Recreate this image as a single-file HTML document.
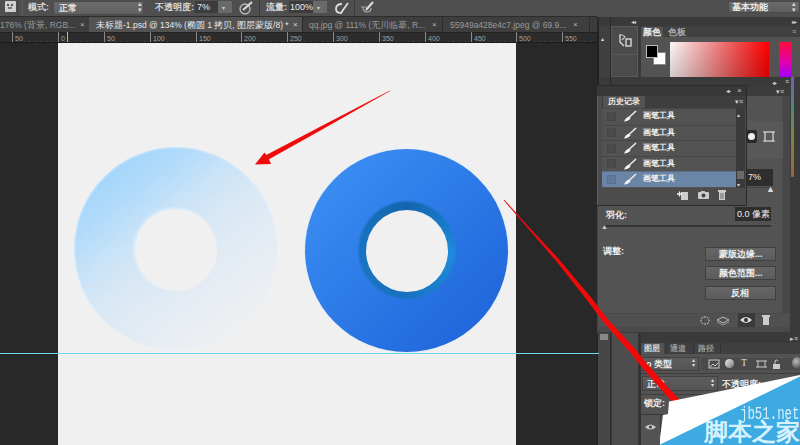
<!DOCTYPE html>
<html><head><meta charset="utf-8">
<style>
*{margin:0;padding:0;box-sizing:border-box}
html,body{width:800px;height:445px;overflow:hidden;background:#282828;font-family:"Liberation Sans",sans-serif;}
.a{position:absolute}
.t{position:absolute;color:#d8d8d8;font-size:9px;line-height:10px;white-space:nowrap}
</style></head><body>
<div class="a" style="left:0;top:0;width:800px;height:445px;overflow:hidden">

<!-- options bar -->
<div class="a" id="opt" style="left:0;top:0;width:800px;height:17px;background:#4f4f4f"></div>
<!-- tool preset icon -->
<div class="a" style="left:5px;top:1px;width:11px;height:11px;background:#d0d0d0;border-radius:1px"></div>
<div class="a" style="left:7px;top:4px;width:2px;height:2px;background:#555"></div>
<div class="a" style="left:11px;top:4px;width:2px;height:2px;background:#555"></div>
<div class="a" style="left:8px;top:7px;width:4px;height:2px;background:#777"></div>
<div class="a" style="left:17px;top:0;width:1px;height:16px;background:#3c3c3c"></div>
<div class="a" style="left:22px;top:0;width:1px;height:16px;background:#5c5c5c"></div>
<div class="t" style="left:28px;top:2px;font-size:9px;font-weight:bold">模式:</div>
<div class="a" style="left:53px;top:1px;width:91px;height:14px;background:linear-gradient(#6c6c6c,#606060);border-radius:2px;box-shadow:inset 0 0 0 1px #4a4a4a"></div>
<div class="t" style="left:59px;top:3px;font-size:9px;color:#e6e6e6;font-weight:bold">正常</div>
<div class="t" style="left:138px;top:1px;font-size:7px;color:#ddd;line-height:6px">▴<br>▾</div>
<div class="t" style="left:155px;top:2px;font-size:9px;font-weight:bold">不透明度:</div>
<div class="a" style="left:195px;top:1px;width:23px;height:12px;background:#3c3c3c"></div>
<div class="t" style="left:197px;top:2px;font-size:9px;color:#eee">7%</div>
<div class="a" style="left:218px;top:1px;width:14px;height:12px;background:#6a6a6a"></div>
<div class="t" style="left:222px;top:3px;font-size:6px;color:#ccc">▾</div>
<svg class="a" style="left:239px;top:1px" width="15" height="14"><circle cx="6" cy="8" r="5" fill="none" stroke="#bbb" stroke-width="1.3"/><path d="M4 9 L13 1" stroke="#ddd" stroke-width="2"/></svg>
<div class="a" style="left:259px;top:0;width:1px;height:16px;background:#3c3c3c"></div>
<div class="t" style="left:266px;top:2px;font-size:9px;font-weight:bold">流量:</div>
<div class="a" style="left:289px;top:1px;width:24px;height:12px;background:#3c3c3c"></div>
<div class="t" style="left:290px;top:2px;font-size:9px;color:#eee">100%</div>
<div class="a" style="left:313px;top:1px;width:14px;height:12px;background:#6a6a6a"></div>
<div class="t" style="left:317px;top:3px;font-size:6px;color:#ccc">▾</div>
<svg class="a" style="left:334px;top:1px" width="16" height="14"><path d="M8 3 Q2 3 2 8 Q2 12 7 12 L9 9 L14 2" fill="none" stroke="#ddd" stroke-width="1.8"/></svg>
<div class="a" style="left:354px;top:0;width:1px;height:16px;background:#3c3c3c"></div>
<svg class="a" style="left:359px;top:1px" width="16" height="14"><path d="M2 6 L8 6 M4 6 Q4 11 8 11 Q12 11 12 7" fill="none" stroke="#aaa" stroke-width="1.2"/><path d="M7 9 L14 1" stroke="#ddd" stroke-width="2"/></svg>
<div class="a" style="left:728px;top:1px;width:72px;height:12px;background:linear-gradient(#6c6c6c,#5e5e5e);box-shadow:inset 0 0 0 1px #4a4a4a"></div>
<div class="t" style="left:732px;top:2px;font-size:9px;color:#eee;font-weight:bold">基本功能</div>
<div class="t" style="left:792px;top:1px;font-size:7px;color:#ddd;line-height:6px">▴<br>▾</div>

<!-- tab strip -->
<div class="a" id="tabs" style="left:0;top:16px;width:597px;height:16px;background:#3c3c3c;border-top:1px solid #2c2c2c"></div>
<div class="a" style="left:0;top:17px;width:89px;height:15px;background:#3e3e3e"></div>
<div class="t" style="left:0;top:20px;font-size:8.5px;color:#9a9a9a">176% (背景, RGB...</div>
<div class="t" style="left:80px;top:20px;font-size:8px;color:#bbb">×</div>
<div class="a" style="left:89px;top:17px;width:213px;height:15px;background:#535353"></div>
<div class="t" style="left:96px;top:20px;font-size:8.5px;color:#e8e8e8">未标题-1.psd @ 134% (椭圆 1 拷贝, 图层蒙版/8) *</div>
<div class="t" style="left:293px;top:20px;font-size:8px;color:#ddd">×</div>
<div class="a" style="left:302px;top:17px;width:1px;height:15px;background:#2c2c2c"></div>
<div class="a" style="left:303px;top:17px;width:139px;height:15px;background:#3e3e3e"></div>
<div class="t" style="left:309px;top:20px;font-size:8.5px;color:#9a9a9a">qq.jpg @ 111% (无川临摹, R...</div>
<div class="t" style="left:432px;top:20px;font-size:8px;color:#bbb">×</div>
<div class="a" style="left:442px;top:17px;width:1px;height:15px;background:#2c2c2c"></div>
<div class="a" style="left:443px;top:17px;width:146px;height:15px;background:#3e3e3e"></div>
<div class="t" style="left:450px;top:20px;font-size:8.5px;color:#9a9a9a">55949a428e4c7.jpeg @ 69.9...</div>
<div class="t" style="left:573px;top:20px;font-size:8px;color:#bbb">×</div>
<div class="a" style="left:589px;top:17px;width:1px;height:15px;background:#2c2c2c"></div>

<!-- ruler -->
<div class="a" id="ruler" style="left:0;top:32px;width:597px;height:11px;background:#2c2c2c;border-top:1px solid #222"></div>
<div class="a" style="left:0;top:42px;width:597px;height:1px;background:#1c1c1c;z-index:1"></div><div class="a" style="left:67px;top:32px;width:1px;height:11px;background:#bbb"></div><svg class="a" style="left:0;top:32px" width="597" height="11" id="rsvg"><line x1="12.5" y1="0" x2="12.5" y2="11" stroke="#8a8a8a" stroke-width="1"/><text x="15" y="9" font-size="7" fill="#a0a0a0" font-family="Liberation Sans">50</text><rect x="18" y="9" width="1" height="2" fill="#4a4a4a"/><rect x="24" y="9" width="1" height="2" fill="#4a4a4a"/><rect x="29" y="9" width="1" height="2" fill="#4a4a4a"/><rect x="35" y="9" width="1" height="2" fill="#4a4a4a"/><rect x="41" y="9" width="1" height="2" fill="#4a4a4a"/><rect x="47" y="9" width="1" height="2" fill="#4a4a4a"/><rect x="52" y="9" width="1" height="2" fill="#4a4a4a"/><line x1="58.5" y1="0" x2="58.5" y2="11" stroke="#8a8a8a" stroke-width="1"/><text x="61" y="9" font-size="7" fill="#a0a0a0" font-family="Liberation Sans">0</text><rect x="64" y="9" width="1" height="2" fill="#4a4a4a"/><rect x="69" y="9" width="1" height="2" fill="#4a4a4a"/><rect x="75" y="9" width="1" height="2" fill="#4a4a4a"/><rect x="81" y="9" width="1" height="2" fill="#4a4a4a"/><rect x="87" y="9" width="1" height="2" fill="#4a4a4a"/><rect x="92" y="9" width="1" height="2" fill="#4a4a4a"/><rect x="98" y="9" width="1" height="2" fill="#4a4a4a"/><line x1="104.5" y1="0" x2="104.5" y2="11" stroke="#8a8a8a" stroke-width="1"/><text x="107" y="9" font-size="7" fill="#a0a0a0" font-family="Liberation Sans">50</text><rect x="110" y="9" width="1" height="2" fill="#4a4a4a"/><rect x="115" y="9" width="1" height="2" fill="#4a4a4a"/><rect x="121" y="9" width="1" height="2" fill="#4a4a4a"/><rect x="127" y="9" width="1" height="2" fill="#4a4a4a"/><rect x="133" y="9" width="1" height="2" fill="#4a4a4a"/><rect x="138" y="9" width="1" height="2" fill="#4a4a4a"/><rect x="144" y="9" width="1" height="2" fill="#4a4a4a"/><line x1="150.5" y1="0" x2="150.5" y2="11" stroke="#8a8a8a" stroke-width="1"/><text x="153" y="9" font-size="7" fill="#a0a0a0" font-family="Liberation Sans">100</text><rect x="155" y="9" width="1" height="2" fill="#4a4a4a"/><rect x="161" y="9" width="1" height="2" fill="#4a4a4a"/><rect x="167" y="9" width="1" height="2" fill="#4a4a4a"/><rect x="173" y="9" width="1" height="2" fill="#4a4a4a"/><rect x="178" y="9" width="1" height="2" fill="#4a4a4a"/><rect x="184" y="9" width="1" height="2" fill="#4a4a4a"/><rect x="190" y="9" width="1" height="2" fill="#4a4a4a"/><line x1="196.5" y1="0" x2="196.5" y2="11" stroke="#8a8a8a" stroke-width="1"/><text x="199" y="9" font-size="7" fill="#a0a0a0" font-family="Liberation Sans">150</text><rect x="201" y="9" width="1" height="2" fill="#4a4a4a"/><rect x="207" y="9" width="1" height="2" fill="#4a4a4a"/><rect x="213" y="9" width="1" height="2" fill="#4a4a4a"/><rect x="218" y="9" width="1" height="2" fill="#4a4a4a"/><rect x="224" y="9" width="1" height="2" fill="#4a4a4a"/><rect x="230" y="9" width="1" height="2" fill="#4a4a4a"/><rect x="236" y="9" width="1" height="2" fill="#4a4a4a"/><line x1="241.5" y1="0" x2="241.5" y2="11" stroke="#8a8a8a" stroke-width="1"/><text x="244" y="9" font-size="7" fill="#a0a0a0" font-family="Liberation Sans">200</text><rect x="247" y="9" width="1" height="2" fill="#4a4a4a"/><rect x="253" y="9" width="1" height="2" fill="#4a4a4a"/><rect x="259" y="9" width="1" height="2" fill="#4a4a4a"/><rect x="264" y="9" width="1" height="2" fill="#4a4a4a"/><rect x="270" y="9" width="1" height="2" fill="#4a4a4a"/><rect x="276" y="9" width="1" height="2" fill="#4a4a4a"/><rect x="282" y="9" width="1" height="2" fill="#4a4a4a"/><line x1="287.5" y1="0" x2="287.5" y2="11" stroke="#8a8a8a" stroke-width="1"/><text x="290" y="9" font-size="7" fill="#a0a0a0" font-family="Liberation Sans">250</text><rect x="293" y="9" width="1" height="2" fill="#4a4a4a"/><rect x="299" y="9" width="1" height="2" fill="#4a4a4a"/><rect x="304" y="9" width="1" height="2" fill="#4a4a4a"/><rect x="310" y="9" width="1" height="2" fill="#4a4a4a"/><rect x="316" y="9" width="1" height="2" fill="#4a4a4a"/><rect x="322" y="9" width="1" height="2" fill="#4a4a4a"/><rect x="327" y="9" width="1" height="2" fill="#4a4a4a"/><line x1="333.5" y1="0" x2="333.5" y2="11" stroke="#8a8a8a" stroke-width="1"/><text x="336" y="9" font-size="7" fill="#a0a0a0" font-family="Liberation Sans">300</text><rect x="339" y="9" width="1" height="2" fill="#4a4a4a"/><rect x="345" y="9" width="1" height="2" fill="#4a4a4a"/><rect x="350" y="9" width="1" height="2" fill="#4a4a4a"/><rect x="356" y="9" width="1" height="2" fill="#4a4a4a"/><rect x="362" y="9" width="1" height="2" fill="#4a4a4a"/><rect x="367" y="9" width="1" height="2" fill="#4a4a4a"/><rect x="373" y="9" width="1" height="2" fill="#4a4a4a"/><line x1="379.5" y1="0" x2="379.5" y2="11" stroke="#8a8a8a" stroke-width="1"/><text x="382" y="9" font-size="7" fill="#a0a0a0" font-family="Liberation Sans">350</text><rect x="385" y="9" width="1" height="2" fill="#4a4a4a"/><rect x="390" y="9" width="1" height="2" fill="#4a4a4a"/><rect x="396" y="9" width="1" height="2" fill="#4a4a4a"/><rect x="402" y="9" width="1" height="2" fill="#4a4a4a"/><rect x="408" y="9" width="1" height="2" fill="#4a4a4a"/><rect x="413" y="9" width="1" height="2" fill="#4a4a4a"/><rect x="419" y="9" width="1" height="2" fill="#4a4a4a"/><line x1="425.5" y1="0" x2="425.5" y2="11" stroke="#8a8a8a" stroke-width="1"/><text x="428" y="9" font-size="7" fill="#a0a0a0" font-family="Liberation Sans">400</text><rect x="431" y="9" width="1" height="2" fill="#4a4a4a"/><rect x="436" y="9" width="1" height="2" fill="#4a4a4a"/><rect x="442" y="9" width="1" height="2" fill="#4a4a4a"/><rect x="448" y="9" width="1" height="2" fill="#4a4a4a"/><rect x="453" y="9" width="1" height="2" fill="#4a4a4a"/><rect x="459" y="9" width="1" height="2" fill="#4a4a4a"/><rect x="465" y="9" width="1" height="2" fill="#4a4a4a"/><line x1="471.5" y1="0" x2="471.5" y2="11" stroke="#8a8a8a" stroke-width="1"/><text x="474" y="9" font-size="7" fill="#a0a0a0" font-family="Liberation Sans">450</text><rect x="476" y="9" width="1" height="2" fill="#4a4a4a"/><rect x="482" y="9" width="1" height="2" fill="#4a4a4a"/><rect x="488" y="9" width="1" height="2" fill="#4a4a4a"/><rect x="494" y="9" width="1" height="2" fill="#4a4a4a"/><rect x="499" y="9" width="1" height="2" fill="#4a4a4a"/><rect x="505" y="9" width="1" height="2" fill="#4a4a4a"/><rect x="511" y="9" width="1" height="2" fill="#4a4a4a"/><line x1="516.5" y1="0" x2="516.5" y2="11" stroke="#8a8a8a" stroke-width="1"/><text x="519" y="9" font-size="7" fill="#a0a0a0" font-family="Liberation Sans">500</text><rect x="522" y="9" width="1" height="2" fill="#4a4a4a"/><rect x="528" y="9" width="1" height="2" fill="#4a4a4a"/><rect x="534" y="9" width="1" height="2" fill="#4a4a4a"/><rect x="539" y="9" width="1" height="2" fill="#4a4a4a"/><rect x="545" y="9" width="1" height="2" fill="#4a4a4a"/><rect x="551" y="9" width="1" height="2" fill="#4a4a4a"/><rect x="557" y="9" width="1" height="2" fill="#4a4a4a"/><line x1="562.5" y1="0" x2="562.5" y2="11" stroke="#8a8a8a" stroke-width="1"/><text x="565" y="9" font-size="7" fill="#a0a0a0" font-family="Liberation Sans">550</text><rect x="568" y="9" width="1" height="2" fill="#4a4a4a"/><rect x="574" y="9" width="1" height="2" fill="#4a4a4a"/><rect x="580" y="9" width="1" height="2" fill="#4a4a4a"/><rect x="585" y="9" width="1" height="2" fill="#4a4a4a"/><rect x="591" y="9" width="1" height="2" fill="#4a4a4a"/><rect x="597" y="9" width="1" height="2" fill="#4a4a4a"/></svg>
<!-- workspace -->
<div class="a" style="left:0;top:43px;width:597px;height:402px;background:#282828"></div>
<div class="a" id="canvas" style="left:58px;top:43px;width:458px;height:402px;background:#f0f0f0"></div>

<!-- light ring -->
<div class="a" style="left:74px;top:147px;width:204px;height:204px;border-radius:50%;background:linear-gradient(142deg,#9ad3fc 0%,#a3d6fb 14.6%,#b2dbfa 25.7%,#c9e3f7 37.8%,#d9e8f5 50%,#e5ecf3 67%,#eef0f2 85%,#f0f0f0 100%);box-shadow:inset 0 0 2px 1px rgba(240,248,255,0.5)"></div>
<div class="a" style="left:134.5px;top:208.5px;width:82px;height:82px;border-radius:50%;background:#f0f0f0;box-shadow:-1px -1px 2px 1px rgba(225,242,255,0.6)"></div>

<!-- blue ring -->
<div class="a" style="left:304.5px;top:148.5px;width:203.5px;height:203.5px;border-radius:50%;background:linear-gradient(135deg,#3f92f5 0%,#2e7ce8 45%,#1c60d8 100%);box-shadow:0 0 1px 0.5px rgba(200,230,255,0.6)"></div>
<div class="a" style="left:355px;top:198px;width:104px;height:104px;background:conic-gradient(#1464ae 0deg,#1778c4 50deg,#1d8bdc 95deg,#1a80cc 140deg,#186fbd 185deg,#1a74c2 240deg,#1872bf 290deg,#1464ae 360deg);-webkit-mask-image:radial-gradient(circle at center,#000 0,#000 47px,transparent 50px);mask-image:radial-gradient(circle at center,#000 0,#000 47px,transparent 50px)"></div>
<div class="a" style="left:366px;top:209.5px;width:82px;height:82px;border-radius:50%;background:#f0f0f0"></div>

<!-- guide -->
<div class="a" style="left:0;top:353px;width:599px;height:1px;background:#6ad8f0;z-index:1"></div>

<!-- right scroll strip -->
<div class="a" style="left:597px;top:32px;width:2px;height:413px;background:#222"></div>
<div class="a" style="left:599px;top:17px;width:11px;height:9px;background:#3a3a3a"></div><div class="a" style="left:599px;top:26px;width:11px;height:51px;background:#404040"></div><div class="a" style="left:599px;top:77px;width:11px;height:368px;background:#3a3a3a"></div>
<div class="t" style="left:601px;top:34px;font-size:6px;color:#ddd">▴</div>

<!-- dock area -->
<div class="a" id="panels" style="left:610px;top:17px;width:190px;height:428px;background:#3a3a3a"></div>
<div class="a" style="left:610px;top:17px;width:1px;height:428px;background:#2a2a2a"></div>
<div class="t" style="left:631px;top:17px;font-size:6px;color:#ccc;letter-spacing:-1px">◂◂</div>
<div class="t" style="left:792px;top:17px;font-size:6px;color:#ccc;letter-spacing:-1px">▸▸</div>
<!-- icon column -->
<div class="a" style="left:611px;top:26px;width:27px;height:51px;background:#4b4b4b;border:1px solid #5a5a5a"></div>
<div class="a" style="left:612px;top:54px;width:25px;height:1px;background:#5a5a5a"></div>
<svg class="a" style="left:617px;top:33px" width="16" height="16"><path d="M3 2 L3 9 L7 13" fill="none" stroke="#ddd" stroke-width="1.3"/><path d="M2 2 Q6 1 8 4 L5 7" fill="none" stroke="#ccc" stroke-width="1.2"/><rect x="9" y="6" width="5" height="7" fill="none" stroke="#eee" stroke-width="1.2"/></svg>
<!-- color panel -->
<div class="a" style="left:641px;top:26px;width:159px;height:51px;background:#535353"></div>
<div class="a" style="left:641px;top:26px;width:159px;height:11px;background:#404040"></div>
<div class="a" style="left:641px;top:27px;width:22px;height:10px;background:#535353"></div>
<div class="t" style="left:643px;top:27px;font-size:8.5px;color:#eee;font-weight:bold">颜色</div>
<div class="t" style="left:668px;top:27px;font-size:8.5px;color:#aaa;font-weight:bold">色板</div>
<div class="t" style="left:792px;top:27px;font-size:7px;color:#aaa">≡</div>
<div class="a" style="left:646px;top:45px;width:12px;height:13px;background:#000;border:1px solid #bbb;z-index:2"></div>
<div class="a" style="left:653px;top:52px;width:13px;height:13px;background:#fff;border:1px solid #888"></div>
<div class="a" style="left:670px;top:42px;width:99px;height:35px;background:linear-gradient(to bottom,rgba(0,0,0,0) 0%,rgba(0,0,0,0.16) 100%),linear-gradient(to right,#fbf6f6,#f0a0a0 35%,#f04848 70%,#ff0000)"></div>
<div class="a" style="left:779px;top:42px;width:13px;height:35px;background:linear-gradient(#ff0a3a,#e000b0 60%,#a000ff)"></div>
<div class="a" style="left:791px;top:77px;width:3px;height:100px;background:linear-gradient(#7a5cb0,#4a8a7a 30%,#7a8a40 60%,#a06040)"></div>
<div class="t" style="left:772px;top:78px;font-size:6px;color:#ccc;letter-spacing:-1px">◂▸</div>
<div class="t" style="left:785px;top:77px;font-size:7px;color:#ccc">≡</div>

<!-- refine panel -->
<div class="a" style="left:597px;top:86px;width:193px;height:10px;background:#3c3c3c"></div>
<div class="t" style="left:776px;top:87px;font-size:7px;color:#ccc">▾≡</div>
<div class="a" style="left:597px;top:96px;width:193px;height:237px;background:#535353;border-left:1px solid #444"></div>
<div class="a" style="left:782px;top:96px;width:8px;height:222px;background:#474747"></div>
<div class="a" style="left:747px;top:121px;width:36px;height:38px;background:#585858"></div>
<div class="a" style="left:746px;top:130px;width:11px;height:13px;background:#2a2a2a;border-radius:2px"></div>
<div class="a" style="left:748px;top:133px;width:7px;height:7px;background:#eee;border-radius:50%"></div>
<svg class="a" style="left:763px;top:130px" width="12" height="13"><rect x="2" y="2" width="8" height="9" fill="none" stroke="#ddd" stroke-width="1.2"/><path d="M0 2H2M10 2H12M0 11H2M10 11H12" stroke="#ddd"/></svg>
<div class="a" style="left:746px;top:169px;width:27px;height:17px;background:#2e2e2e"></div>
<div class="t" style="left:748px;top:172px;font-size:9px;color:#eee">7%</div>
<div class="a" style="left:745px;top:187px;width:27px;height:1px;background:#444"></div>
<div class="t" style="left:766px;top:184px;font-size:9px;color:#ddd">▲</div>
<div class="t" style="left:606px;top:210px;font-size:9px;color:#eee;font-weight:bold">羽化:</div>
<div class="a" style="left:735px;top:207px;width:36px;height:14px;background:#2e2e2e"></div>
<div class="t" style="left:737px;top:209px;font-size:9px;color:#eee">0.0 像素</div>
<div class="a" style="left:604px;top:225px;width:167px;height:2px;background:#333"></div>
<div class="t" style="left:601px;top:222px;font-size:7px;color:#ccc">▲</div>
<div class="t" style="left:603px;top:246px;font-size:9px;color:#eee;font-weight:bold">调整:</div>
<div class="a" style="left:706px;top:248px;width:69px;height:12px;background:linear-gradient(#666,#5c5c5c);box-shadow:0 0 0 1px #404040"></div>
<div class="t" style="left:719px;top:249px;font-size:9px;color:#eee;font-weight:bold">蒙版边缘...</div>
<div class="a" style="left:706px;top:267px;width:69px;height:12px;background:linear-gradient(#666,#5c5c5c);box-shadow:0 0 0 1px #404040"></div>
<div class="t" style="left:719px;top:268px;font-size:9px;color:#eee;font-weight:bold">颜色范围...</div>
<div class="a" style="left:706px;top:287px;width:69px;height:12px;background:linear-gradient(#666,#5c5c5c);box-shadow:0 0 0 1px #404040"></div>
<div class="t" style="left:731px;top:288px;font-size:9px;color:#eee;font-weight:bold">反相</div>
<div class="a" style="left:598px;top:313px;width:192px;height:14px;background:#505050;border-top:1px solid #4a4a4a"></div>
<div class="a" style="left:738px;top:313px;width:17px;height:14px;background:#3a3a3a"></div>
<svg class="a" style="left:699px;top:315px" width="12" height="11"><rect x="2" y="2" width="8" height="7" rx="3" fill="none" stroke="#ccc" stroke-dasharray="2 1"/></svg>
<svg class="a" style="left:716px;top:315px" width="14" height="11"><path d="M1 5 L7 2 L13 5 L7 8Z" fill="none" stroke="#bbb"/><path d="M1 7 L7 10 L13 7" fill="none" stroke="#999"/></svg>
<svg class="a" style="left:739px;top:315px" width="14" height="10"><path d="M1 5 Q7 -1 13 5 Q7 11 1 5Z" fill="#ddd"/><circle cx="7" cy="5" r="2" fill="#333"/></svg>
<svg class="a" style="left:761px;top:314px" width="10" height="12"><rect x="2" y="3" width="6" height="8" fill="#ccc"/><rect x="1" y="1" width="8" height="2" fill="#ccc"/></svg>
<div class="a" style="left:598px;top:327px;width:192px;height:6px;background:#4a4a4a;border-bottom:1px solid #3a3a3a"></div>

<!-- history floating -->
<div class="a" style="left:596px;top:85px;width:151px;height:121px;background:#4c4c4c;border:1px solid #2a2a2a;box-shadow:inset 1px 1px 0 #606060"></div>
<div class="a" style="left:597px;top:86px;width:149px;height:10px;background:#383838"></div>
<div class="t" style="left:726px;top:86px;font-size:6px;color:#ccc;letter-spacing:-1px">◂▸</div>
<div class="t" style="left:737px;top:86px;font-size:8px;color:#ccc">×</div>
<div class="a" style="left:602px;top:96px;width:144px;height:12px;background:#3e3e3e"></div>
<div class="a" style="left:603px;top:96px;width:42px;height:12px;background:#535353"></div>
<div class="t" style="left:608px;top:97px;font-size:8px;color:#f0f0f0;font-weight:bold">历史记录</div>
<div class="t" style="left:735px;top:97px;font-size:7px;color:#ccc">▾≡</div>
<div class="a" style="left:602px;top:108px;width:134px;height:80px;background:#535353"></div>
<div class="a" style="left:602px;top:108px;width:134px;height:15.6px;background:#535353;border-top:1px solid #474747"></div>
<div class="a" style="left:607px;top:111.5px;width:9px;height:9px;border:1px solid #464646;background:#4a4a4a"></div>
<svg class="a" style="left:623px;top:110px" width="14" height="12"><path d="M13 1 L6 7.5" stroke="#e8e8e8" stroke-width="1.7"/><path d="M6.5 6.5 Q3 7 1 11.5 Q5 11.5 7.5 8.5Z" fill="#f4f4f4"/></svg>
<div class="t" style="left:643px;top:111px;font-size:8.2px;color:#f4f4f4;font-weight:bold">画笔工具</div>
<div class="a" style="left:602px;top:124.6px;width:134px;height:15.6px;background:#535353;border-top:1px solid #474747"></div>
<div class="a" style="left:607px;top:128.1px;width:9px;height:9px;border:1px solid #464646;background:#4a4a4a"></div>
<svg class="a" style="left:623px;top:126.6px" width="14" height="12"><path d="M13 1 L6 7.5" stroke="#e8e8e8" stroke-width="1.7"/><path d="M6.5 6.5 Q3 7 1 11.5 Q5 11.5 7.5 8.5Z" fill="#f4f4f4"/></svg>
<div class="t" style="left:643px;top:127.6px;font-size:8.2px;color:#f4f4f4;font-weight:bold">画笔工具</div>
<div class="a" style="left:602px;top:140.2px;width:134px;height:15.6px;background:#535353;border-top:1px solid #474747"></div>
<div class="a" style="left:607px;top:143.7px;width:9px;height:9px;border:1px solid #464646;background:#4a4a4a"></div>
<svg class="a" style="left:623px;top:142.2px" width="14" height="12"><path d="M13 1 L6 7.5" stroke="#e8e8e8" stroke-width="1.7"/><path d="M6.5 6.5 Q3 7 1 11.5 Q5 11.5 7.5 8.5Z" fill="#f4f4f4"/></svg>
<div class="t" style="left:643px;top:143.2px;font-size:8.2px;color:#f4f4f4;font-weight:bold">画笔工具</div>
<div class="a" style="left:602px;top:155.8px;width:134px;height:15.6px;background:#535353;border-top:1px solid #474747"></div>
<div class="a" style="left:607px;top:159.3px;width:9px;height:9px;border:1px solid #464646;background:#4a4a4a"></div>
<svg class="a" style="left:623px;top:157.8px" width="14" height="12"><path d="M13 1 L6 7.5" stroke="#e8e8e8" stroke-width="1.7"/><path d="M6.5 6.5 Q3 7 1 11.5 Q5 11.5 7.5 8.5Z" fill="#f4f4f4"/></svg>
<div class="t" style="left:643px;top:158.8px;font-size:8.2px;color:#f4f4f4;font-weight:bold">画笔工具</div>
<div class="a" style="left:602px;top:171.4px;width:134px;height:15.6px;background:#6b85a6;border-top:1px solid #5a6e88"></div>
<div class="a" style="left:607px;top:174.9px;width:9px;height:9px;border:1px solid #587090;background:#617a9c"></div>
<svg class="a" style="left:623px;top:173.4px" width="14" height="12"><path d="M13 1 L6 7.5" stroke="#e8e8e8" stroke-width="1.7"/><path d="M6.5 6.5 Q3 7 1 11.5 Q5 11.5 7.5 8.5Z" fill="#f4f4f4"/></svg>
<div class="t" style="left:643px;top:174.4px;font-size:8.2px;color:#f4f4f4;font-weight:bold">画笔工具</div>
<div class="a" style="left:736px;top:108px;width:9px;height:80px;background:#3a3a3a"></div>
<div class="t" style="left:737px;top:110px;font-size:6px;color:#ccc">▴</div>
<div class="a" style="left:737px;top:171px;width:7px;height:8px;background:#6a6a6a"></div>
<div class="t" style="left:737px;top:180px;font-size:6px;color:#ccc">▾</div>
<div class="a" style="left:602px;top:188px;width:144px;height:17px;background:#4c4c4c"></div>
<svg class="a" style="left:676px;top:189px" width="13" height="12"><rect x="5" y="3" width="7" height="8" fill="#ccc"/><path d="M1 5H6M3.5 2.5V7.5" stroke="#eee" stroke-width="1.3"/></svg>
<svg class="a" style="left:697px;top:190px" width="13" height="10"><rect x="1" y="2" width="11" height="7" rx="1" fill="#ccc"/><circle cx="6.5" cy="5.5" r="2" fill="#444"/><rect x="4" y="1" width="4" height="2" fill="#ccc"/></svg>
<svg class="a" style="left:717px;top:189px" width="10" height="12"><rect x="2" y="3" width="6" height="8" fill="#ccc"/><rect x="1" y="1" width="8" height="2" fill="#ccc"/><path d="M4 4V10M6 4V10" stroke="#666"/></svg>

<!-- collapsed columns bottom -->
<div class="a" style="left:598px;top:333px;width:12px;height:112px;background:#474747"></div>
<div class="a" style="left:600px;top:334px;width:8px;height:6px;background:#888"></div>
<div class="a" style="left:611px;top:333px;width:27px;height:112px;background:#4d4d4d;border-left:1px solid #3a3a3a"></div>
<div class="a" style="left:638px;top:333px;width:3px;height:112px;background:#333"></div>

<!-- layers -->
<div class="a" style="left:641px;top:333px;width:159px;height:10px;background:#3a3a3a"></div>
<div class="t" style="left:790px;top:334px;font-size:7px;color:#ccc">▸≡</div>
<div class="a" style="left:641px;top:343px;width:159px;height:102px;background:#535353"></div>
<div class="a" style="left:641px;top:343px;width:159px;height:11px;background:#404040"></div>
<div class="a" style="left:641px;top:343px;width:23px;height:11px;background:#535353"></div>
<div class="t" style="left:644px;top:344px;font-size:8px;color:#e0e0e0;font-weight:bold">图层</div>
<div class="a" style="left:666px;top:343px;width:1px;height:11px;background:#333"></div>
<div class="t" style="left:670px;top:344px;font-size:8px;color:#9a9a9a;font-weight:bold">通道</div>
<div class="a" style="left:693px;top:343px;width:1px;height:11px;background:#333"></div>
<div class="t" style="left:698px;top:344px;font-size:8px;color:#9a9a9a;font-weight:bold">路径</div>
<div class="a" style="left:720px;top:343px;width:1px;height:11px;background:#333"></div>
<div class="a" style="left:643px;top:358px;width:55px;height:12px;background:linear-gradient(#5e5e5e,#545454);box-shadow:0 0 0 1px #404040"></div>
<div class="t" style="left:646px;top:359px;font-size:9px;color:#eee;font-weight:bold">ρ 类型</div>
<div class="t" style="left:692px;top:358px;font-size:6px;color:#ddd;line-height:5px">▴<br>▾</div>
<div class="a" style="left:701px;top:358px;width:99px;height:12px;background:#4a4a4a"></div>
<svg class="a" style="left:708px;top:359px" width="12" height="10"><rect x="1" y="1" width="10" height="8" fill="none" stroke="#ccc"/><path d="M2 8 L5 5 L7 7 L10 4" stroke="#ccc" fill="none"/></svg>
<div class="a" style="left:725px;top:359px;width:9px;height:9px;border-radius:50%;background:linear-gradient(135deg,#eee,#777)"></div>
<div class="t" style="left:741px;top:358px;font-size:10px;color:#ddd;font-family:'Liberation Serif',serif">T</div>
<svg class="a" style="left:756px;top:359px" width="11" height="10"><rect x="2" y="2" width="7" height="6" fill="none" stroke="#ccc"/><path d="M0 2H2M9 2H11M0 8H2M9 8H11" stroke="#ccc"/></svg>
<svg class="a" style="left:771px;top:358px" width="12" height="12"><rect x="2" y="6" width="7" height="5" fill="#ccc"/><path d="M4 6V3Q5.5 1 7 3" stroke="#ccc" fill="none"/></svg>
<div class="a" style="left:792px;top:357px;width:10px;height:12px;border-radius:50%;background:radial-gradient(circle at 40% 35%,#bbb,#333)"></div>
<div class="a" style="left:641px;top:373px;width:159px;height:1px;background:#3e3e3e"></div>
<div class="a" style="left:643px;top:377px;width:74px;height:13px;background:linear-gradient(#5e5e5e,#545454);box-shadow:0 0 0 1px #404040"></div>
<div class="t" style="left:647px;top:379px;font-size:9px;color:#eee;font-weight:bold">正常</div>
<div class="t" style="left:711px;top:378px;font-size:6px;color:#ddd;line-height:5px">▴<br>▾</div>
<div class="t" style="left:722px;top:379px;font-size:9px;color:#eee;font-weight:bold">不透明度:</div>
<div class="a" style="left:641px;top:394px;width:159px;height:1px;background:#3e3e3e"></div>
<div class="t" style="left:644px;top:398px;font-size:9px;color:#eee;font-weight:bold">锁定:</div>
<div class="a" style="left:641px;top:414px;width:159px;height:1px;background:#3a3a3a"></div>
<div class="a" style="left:641px;top:415px;width:159px;height:30px;background:#535353"></div>
<svg class="a" style="left:644px;top:423px" width="13" height="8"><path d="M1 4 Q6.5 -1 12 4 Q6.5 9 1 4Z" fill="#ccc"/><circle cx="6.5" cy="4" r="1.6" fill="#444"/></svg>
<div class="a" style="left:660px;top:415px;width:1px;height:30px;background:#3a3a3a"></div>

<!-- watermark -->
<svg class="a" style="left:0;top:0" width="800" height="445">
<polygon points="389.9,90.6 359.6,106.2 319.2,127.2 264.8,155.8 267.2,160.2 320.8,130.2 360.4,107.8 390.1,91.0" fill="#f00a0a"/>
<polygon points="255,164.5 264.5,152.5 268,157 271,164" fill="#f00a0a"/>
<polygon points="503.7,200.3 529.3,230.1 555.7,260.6 588.1,301.5 603.0,321.7 629.7,352.0 641.6,367.0 663.5,392.3 683.3,414.4 688.7,409.6 668.5,387.7 646.4,363.0 634.3,348.0 607.0,318.3 591.9,298.5 558.3,258.4 530.7,228.9 504.3,199.7" fill="#f00a0a"/>
<polygon points="669,401.5 800,375 800,445 660,445 660,438 663,415 668,414" fill="#ffffff"/>
<polygon points="659,445 800,376.5 800,445" fill="#3daae2"/>
</svg>
<div class="a" style="left:740px;top:405px;font-family:'Liberation Mono',monospace;font-size:12.4px;line-height:14px;color:#d6f2ff;transform:scaleY(1.42);transform-origin:0 0;white-space:nowrap">jb51.net</div>
<div class="a" style="left:704px;top:419px;font-size:23.5px;line-height:26px;color:#d6f2ff;font-weight:bold;white-space:nowrap">脚本之家</div>

</div>
</body></html>
